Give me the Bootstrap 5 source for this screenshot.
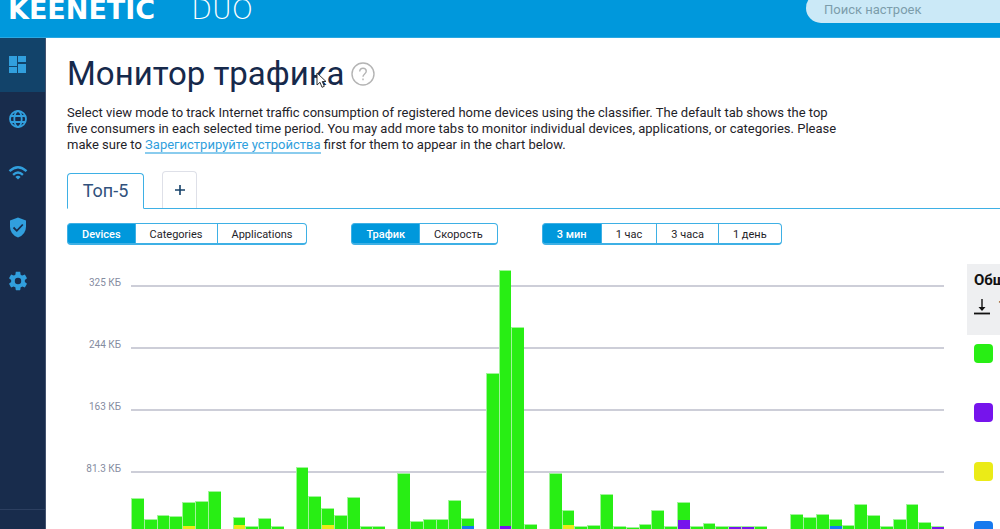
<!DOCTYPE html>
<html lang="ru">
<head>
<meta charset="utf-8">
<meta name="viewport" content="width=device-width, initial-scale=1">
<title>Монитор трафика</title>
<link href="https://cdn.jsdelivr.net/npm/bootstrap@5.3.0/dist/css/bootstrap.min.css" rel="stylesheet">
<style>
:root { --kn-blue: #0098dc; --kn-navy: #182c4c; --kn-line: #3eb0e5; }
body { font-family: Roboto, "Liberation Sans", sans-serif; font-size: 13px; line-height: 16px; color: #1f2329; }
.app-bar { height: 38px; background: var(--kn-blue); border-bottom: 1px solid #2aa8e2; }
.brand-name { font-family: "DejaVu Sans", sans-serif; font-size: 27px; line-height: 20px; color: #fff; gap: 36px; padding-left: 8px; }
.brand-name b { font-weight: 700; }
.brand-name span { font-weight: 200; }
.search-box { width: 194px; height: 30px; margin-bottom: 14px; background: #cbe9f7; border: 0; padding: 3px 18px 0; font-size: 13px; color: #2b4a5c; }
.search-box::placeholder { color: #7c9dab; opacity: 1; }
.side-nav { width: 46px; background: var(--kn-navy); border-right: 1px solid #43536f; }
.side-nav .nav-link { height: 54px; padding: 0 9px 0 0; color: #319fdd; }
.side-nav .nav-link.active { background: #12436a; }
.side-foot { height: 20px; border-top: 1px solid #2c3f60; }
.content-area { padding: 16px 0 0 21px; }
.page-title { font-size: 33px; line-height: 40px; color: #16294b; }
.help-btn { width: 24px; height: 24px; margin-left: 6px; }
.intro { max-width: 780px; margin: 11px 0 18px; }
.intro a { color: #319fdd; text-decoration: none; border-bottom: 2px solid #8accee; }
.view-tabs { height: 38px; border-bottom: 1px solid var(--kn-line); gap: 18px; }
.view-tabs .nav-link { border-radius: 4px 4px 0 0; padding: 0; }
.view-tabs .nav-link.active { width: 77px; height: 36px; font-size: 18px; color: #31517c; border-color: var(--kn-line) var(--kn-line) #fff; margin-bottom: -1px; }
.view-tabs .add-tab { width: 35px; height: 37px; border-color: #dee0e8; border-bottom: 0; margin: 0; color: #16426a; }
.switches { gap: 44px; margin: 14px 0 19px; }
.switches .btn { --bs-btn-font-size: 11px; --bs-btn-line-height: 17px; --bs-btn-padding-x: 14px; --bs-btn-border-radius: 4px; --bs-btn-color: #1f2329; --bs-btn-border-color: var(--kn-line); --bs-btn-active-color: #fff; --bs-btn-active-bg: var(--kn-blue); --bs-btn-active-border-color: var(--kn-line); padding-top: 2px; padding-bottom: 0; border-bottom-width: 2px; }
.switches .btn.active { font-weight: 500; }
.axis-labels { width: 54px; padding-top: 12px; font-size: 10px; line-height: 14px; color: #858c9f; }
.axis-labels div, .grid-lines div { height: 62px; }
.grid-lines { padding-top: 21px; }
.grid-lines div { border-top: 2px solid #cdced8; }
.plot { margin-left: 10px; }
.bar-set { inset: auto 0 0 0; height: 270px; }
.bar-col { flex: 1 1 0; min-width: 0; border: 1px solid #a1f59a; border-width: 1px 0 0 1px; }
.bar-col.blank { border: 0; }
.c-green { background: #28ee14; } .c-purple { background: #7614ec; } .c-yellow { background: #ebeb17; } .c-blue { background: #1779ee; }
.legend-panel { width: 33px; margin-left: 23px; }
.total-box { height: 71px; background: #eeeff1; padding: 7px 0 0 7px; font-size: 15px; line-height: 18px; color: #111; }
.swatch { width: 19px; height: 19px; border-radius: 4px; }
.swatches { gap: 40px; padding: 9px 0 0 7px; }
.pointer { left: 249px; top: 18px; }
</style>
</head>
<body class="vh-100 overflow-hidden d-flex flex-column">
<header class="app-bar d-flex justify-content-between align-items-end flex-shrink-0">
  <div class="brand-name d-flex align-self-start"><b>KEENETIC</b><span>DUO</span></div>
  <input class="search-box rounded-start-pill" type="search" placeholder="Поиск настроек" aria-label="Поиск настроек">
</header>
<div class="d-flex flex-grow-1 overflow-hidden">
  <nav class="side-nav d-flex flex-column flex-shrink-0" aria-label="Меню">
    <a class="nav-link active d-flex align-items-center justify-content-center" href="#" aria-label="Панель"><svg width="18" height="18" viewBox="0 0 18 18" fill="currentColor"><path d="M0 0h8v10H0zM9 0h8v6H9zM0 11h8v6H0zM9 8h8v9H9z"/></svg></a>
    <a class="nav-link d-flex align-items-center justify-content-center" href="#" aria-label="Интернет"><svg width="18" height="18" viewBox="0 0 18 18" fill="none" stroke="currentColor" stroke-width="1.800"><circle cx="9" cy="9" r="8"/><ellipse cx="9" cy="9" rx="3.700" ry="8"/><path d="M1.500 6h15M1.500 12h15"/></svg></a>
    <a class="nav-link d-flex align-items-center justify-content-center" href="#" aria-label="Wi-Fi"><svg width="20" height="16" viewBox="0 0 20 16" fill="none" stroke="currentColor" stroke-width="2.300"><path d="M1.500 6.200Q10-1.800 18.500 6.200M5.100 9.800Q10 5.200 14.900 9.800"/><path d="M10 10.800q1.500 0 2.600 1.100L10 14.600 7.400 11.900Q8.500 10.800 10 10.800z" fill="currentColor" stroke="none"/></svg></a>
    <a class="nav-link d-flex align-items-center justify-content-center" href="#" aria-label="Защита"><svg width="18" height="21" viewBox="0 0 18 21"><path d="M9 .5l8 3v6q0 8-8 11-8-3-8-11v-6z" fill="currentColor"/><path d="M4.500 10.500l3.300 3.300 6-6.300" fill="none" stroke="#182c4c" stroke-width="1.800"/></svg></a>
    <a class="nav-link d-flex align-items-center justify-content-center" href="#" aria-label="Настройки"><svg width="22" height="22" viewBox="0 0 24 24" fill="currentColor"><path d="M19.430 12.980c.04-.32.07-.64.07-.98s-.03-.66-.07-.98l2.110-1.650c.19-.15.24-.42.12-.64l-2-3.460c-.12-.22-.39-.3-.61-.22l-2.490 1c-.52-.4-1.080-.73-1.690-.98l-.38-2.650C14.460 2.180 14.250 2 14 2h-4c-.25 0-.46.18-.49.42l-.38 2.650c-.61.25-1.170.59-1.690.98l-2.490-1c-.23-.09-.49 0-.61.22l-2 3.460c-.13.22-.07.49.12.64l2.110 1.650c-.04.32-.07.65-.07.98s.03.66.07.98l-2.110 1.650c-.19.15-.24.42-.12.64l2 3.460c.12.22.39.3.61.22l2.490-1c.52.4 1.080.73 1.690.98l.38 2.650c.03.24.24.42.49.42h4c.25 0 .46-.18.49-.42l.38-2.650c.61-.25 1.170-.59 1.690-.98l2.490 1c.23.09.49 0 .61-.22l2-3.460c.12-.22.07-.49-.12-.64zM12 15.500a3.500 3.500 0 1 1 0-7 3.500 3.500 0 0 1 0 7z"/></svg></a>
    <div class="side-foot mt-auto"></div>
  </nav>
  <main class="content-area flex-grow-1 overflow-hidden">
    <div class="d-flex align-items-center position-relative">
      <h1 class="page-title fw-normal m-0">Монитор трафика</h1>
      <button type="button" class="help-btn btn p-0 border-0 d-flex" aria-label="Справка"><svg width="24" height="24" viewBox="0 0 24 24" fill="none" stroke="#b4b4b4" stroke-width="1.400"><circle cx="12" cy="12" r="11"/><path d="M8.700 9.500q.2-3.300 3.300-3.300t3.300 2.900q0 1.500-1.700 2.900T12 14.800M12 16.500v1.700"/></svg></button>
      <svg class="pointer position-absolute" width="12" height="17" viewBox="0 0 12 17"><path d="M1 1v12l3-2.700 2 5 2.300-1-2-4.800H10z" fill="#fff" stroke="#333"/></svg>
    </div>
    <p class="intro">Select view mode to track Internet traffic consumption of registered home devices using the classifier. The default tab shows the top five consumers in each selected time period. You may add more tabs to monitor individual devices, applications, or categories. Please make sure to <a href="#">Зарегистрируйте устройства</a> first for them to appear in the chart below.</p>
    <div class="view-tabs nav nav-tabs align-items-end" role="tablist">
      <button type="button" class="nav-link active" role="tab" aria-selected="true">Топ-5</button>
      <button type="button" class="nav-link add-tab d-flex align-items-center justify-content-center" aria-label="Добавить"><svg width="10" height="10" viewBox="0 0 10 10" stroke="currentColor" stroke-width="1.600"><path d="M5 0v10M0 5h10"/></svg></button>
    </div>
    <div class="switches d-flex">
      <div class="btn-group" role="group" aria-label="Вид"><button type="button" class="btn active">Devices</button><button type="button" class="btn">Categories</button><button type="button" class="btn">Applications</button></div>
      <div class="btn-group" role="group" aria-label="Данные"><button type="button" class="btn active">Трафик</button><button type="button" class="btn">Скорость</button></div>
      <div class="btn-group" role="group" aria-label="Период"><button type="button" class="btn active">3 мин</button><button type="button" class="btn">1 час</button><button type="button" class="btn">3 часа</button><button type="button" class="btn">1 день</button></div>
    </div>
    <div class="d-flex">
      <div class="axis-labels text-end flex-shrink-0"><div>325 КБ</div><div>244 КБ</div><div>163 КБ</div><div>81.3 КБ</div></div>
      <div class="plot position-relative flex-grow-1 align-self-start">
        <div class="grid-lines"><div></div><div></div><div></div><div></div></div>
        <div class="bar-set position-absolute d-flex align-items-end" id="bars"></div>
      </div>
      <aside class="legend-panel flex-shrink-0 overflow-hidden">
        <div class="total-box text-nowrap overflow-hidden"><b class="fw-bold d-block">Общ</b>
          <div class="d-flex align-items-center gap-2 mt-2"><svg class="flex-shrink-0" width="16" height="17" viewBox="0 0 16 17" fill="none" stroke="#111"><path d="M8 1v10" stroke-width="1.400"/><path d="M4.500 9h7L8 13z" fill="#111" stroke="none"/><path d="M0 15.500h16" stroke-width="1.800"/></svg><span>1</span></div></div>
        <div class="swatches d-flex flex-column"><span class="swatch c-green"></span><span class="swatch c-purple"></span><span class="swatch c-yellow"></span><span class="swatch c-blue"></span></div>
      </aside>
    </div>
  </main>
</div>
<script src="https://cdn.jsdelivr.net/npm/bootstrap@5.3.0/dist/js/bootstrap.bundle.min.js"></script>
<script>
// Total height of each time slot, then the part of another device at its foot
const totals = [35,14,18,17,31,32,42,0,16,7,15,7,0,66,37,25,18,36,7,7,0,60,12,14,14,33,15,0,160,263,206,9,0,60,23,7,8,39,7,6,9,23,7,31,7,10,7,7,7,7,0,0,19,16,19,14,8,29,18,7,14,29,11,7];
const feet = {4:['yellow',7],8:['yellow',8],15:['yellow',8],26:['blue',7],29:['purple',7],34:['yellow',8],43:['purple',13],47:['purple',7],48:['purple',7],55:['blue',7],63:['purple',7]};
const host = document.getElementById('bars');
totals.forEach((h, i) => {
  const bar = document.createElement('div');
  bar.className = 'bar-col d-flex flex-column justify-content-end ' + (h ? 'c-green' : 'blank');
  bar.style.height = h + 'px';
  if (feet[i]) {
    const foot = document.createElement('div');
    foot.className = 'c-' + feet[i][0];
    foot.style.height = feet[i][1] + 'px';
    bar.append(foot);
  }
  host.append(bar);
});
</script>
</body>
</html>
